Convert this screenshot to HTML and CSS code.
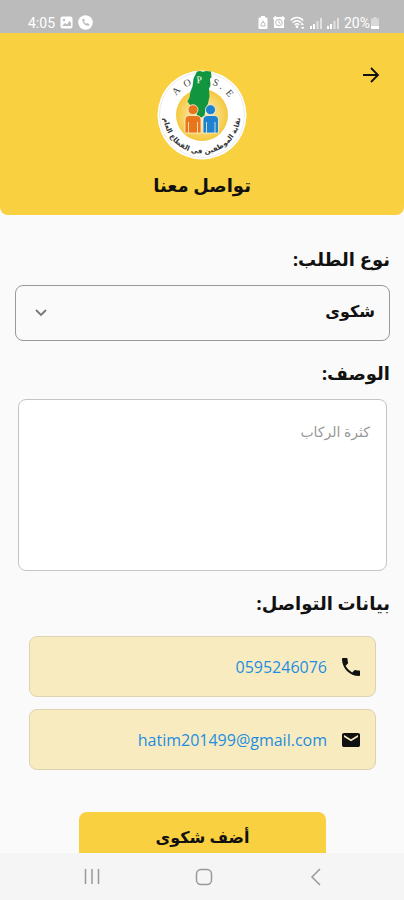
FILE: index.html
```html
<!DOCTYPE html>
<html lang="ar" dir="rtl">
<head>
  <meta charset="UTF-8">
  <meta name="viewport" content="width=device-width, initial-scale=1.0">
  <title>تواصل معنا</title>
  <link rel="stylesheet" href="styles.css">
</head>
<body>
<div class="status-bar" dir="ltr">
  <div class="status-group">
    <span>4:05</span>
    <svg width="13" height="13" viewBox="0 0 13 13">
      <rect x="0.5" y="0.5" width="12" height="12" rx="2" fill="#fff"/>
      <circle cx="4" cy="4" r="1.2" fill="#bbb"/>
      <path d="M2 10l3-3 2 1.5L9.500 5 11 7v3z" fill="#bbb"/>
    </svg>
    <svg width="15" height="15" viewBox="0 0 15 15">
      <circle cx="7.500" cy="7.500" r="7.300" fill="#fff"/>
      <path d="M4.500 4c-.6 3.500 2.500 7 6.200 6.700l.7-1.500-2-1.200-1 .8C7 8.200 6.300 7.300 6 6.300l.9-.9-.9-2z" fill="#bbb"/>
    </svg>
  </div>
  <div class="status-group">
    <svg width="10" height="13" viewBox="0 0 10 13">
      <path d="M3 0h4v1.500h1.500a1 1 0 0 1 1 1V12a1 1 0 0 1-1 1h-7a1 1 0 0 1-1-1V2.500a1 1 0 0 1 1-1H3z" fill="#fff"/>
      <path d="M5 4.500v2M3 7.500L5 6l2 1.500V10H3z" fill="none" stroke="#bbb"/>
    </svg>
    <svg width="12" height="13" viewBox="0 0 12 13">
      <path d="M1 1h10v11H1z" fill="#fff"/>
      <path d="M0 3l3-2.500M12 3L9 .5" stroke="#fff" stroke-width="1.500"/>
      <circle cx="6" cy="6.500" r="3.300" fill="none" stroke="#bbb"/>
      <path d="M6 4.500v2.200l1.400 1" fill="none" stroke="#bbb"/>
    </svg>
    <svg width="15" height="13" viewBox="0 0 15 13" fill="none" stroke="#fff">
      <path d="M.7 4.500c3.500-4 9-4 12.500 0M2.700 6.700c2.500-2.700 6-2.700 8.500 0M4.700 8.800c1.500-1.500 3-1.500 4.500 0" stroke-width="1.400"/>
      <circle cx="7" cy="10.700" r="1" fill="#fff"/>
      <path d="M11 9l1.200-1.500L13.400 9M11.500 11l1.200 1.500 1.200-1.500" stroke-width="1.200"/>
    </svg>
    <svg width="12" height="12" viewBox="0 0 12 12">
      <path d="M0 9h2v3H0zM3 7h2v5H3z" fill="#fff"/>
      <path d="M6.500 4h2v8h-2zM10 1h2v11h-2z" fill="#e2e2e2"/>
    </svg>
    <svg width="12" height="12" viewBox="0 0 12 12">
      <path d="M0 9h2v3H0zM3 7h2v5H3z" fill="#fff"/>
      <path d="M6.500 4h2v8h-2zM10 1h2v11h-2z" fill="#e2e2e2"/>
    </svg>
    <span class="battery">20%
      <svg width="8" height="12" viewBox="0 0 8 12">
        <path d="M2.500 0h3v1.500H8V12H0V1.500h2.500z" fill="#d8d8d8"/>
        <path d="M0 9h8v3H0z" fill="#fff"/>
      </svg>
    </span>
  </div>
</div>

<header class="page-header">
  <button class="back-button" type="button" aria-label="رجوع">
    <svg width="18" height="18" viewBox="0 0 18 18" fill="none" stroke="#111" stroke-width="1.800">
      <path d="M1 9h15M9 2l7 7-7 7"/>
    </svg>
  </button>
  <svg class="logo" viewBox="0 0 90 90" direction="ltr" role="img" aria-label="AOPSE">
    <defs>
      <radialGradient id="glow">
        <stop offset="0" stop-color="#fff3cf"/>
        <stop offset="1" stop-color="#f4c83e"/>
      </radialGradient>
      <path id="arc-top" d="M13 45a32 32 0 0 1 64 0"/>
      <path id="arc-bottom" d="M6.500 45a38.500 38.500 0 0 0 77 0"/>
    </defs>
    <circle cx="45" cy="45" r="44.500" fill="#fff"/>
    <circle cx="45" cy="45" r="42.500" fill="none" stroke="#e3e3e3" stroke-width="0.700"/>
    <circle cx="45" cy="45" r="26" fill="url(#glow)"/>
    <path d="M40 1.500L43 1l3 .8L49 1l5 .5.500 6-1.500 1 .5 7-1.500 3 .5 8-1.500 7-2.500 6-1 6-3 2-4-1-2-6-5-5-3-4 2-4 1-6 2-5 1-8z" fill="#11963f"/>
    <g stroke="#fff3cf" stroke-width="0.800">
      <path d="M28 63V50q0-4.500 4.500-4.500h6.500q5 0 5 4.500v13z" fill="#e8741c"/>
      <circle cx="36" cy="39.700" r="5" fill="#e8741c"/>
      <path d="M46 63V50q0-4.500 5-4.500h6q4.500 0 4.500 4.500v13z" fill="#1e82d2"/>
      <circle cx="53.500" cy="39.700" r="5" fill="#1e82d2"/>
      <path d="M31.500 52v11M40.500 52v11M49.500 52v11M58 52v11"/>
    </g>
    <text class="logo-latin"><textPath href="#arc-top" startOffset="51%">A&nbsp; O&nbsp; <tspan class="logo-light">P</tspan>&nbsp; . S . &nbsp;E</textPath></text>
    <text class="logo-arabic"><textPath href="#arc-bottom" startOffset="50%">نقابة الموظفين في القطاع العام</textPath></text>
  </svg>
  <h1>تواصل معنا</h1>
</header>

<main class="content">
  <form class="contact-form">
    <label for="request-type">نوع الطلب:</label>
    <div class="select-box">
      <select id="request-type">
        <option>شكوى</option>
      </select>
      <svg class="chevron" width="12" height="8" viewBox="0 0 12 8" fill="none" stroke="#777" stroke-width="1.800">
        <path d="M1 1l5 5 5-5"/>
      </svg>
    </div>

    <label for="description">الوصف:</label>
    <textarea id="description" placeholder="كثرة الركاب"></textarea>

    <h2>بيانات التواصل:</h2>
    <div class="contact-list">
      <a class="contact-card" href="tel:0595246076">
        <svg width="24" height="24" viewBox="0 0 24 24">
          <path d="M6.620 10.790c1.440 2.830 3.760 5.140 6.590 6.590l2.200-2.200c.27-.27.67-.36 1.020-.24 1.120.37 2.330.57 3.570.57.55 0 1 .45 1 1V20c0 .55-.45 1-1 1C10.610 21 3 13.390 3 4c0-.55.45-1 1-1h3.500c.55 0 1 .45 1 1 0 1.250.2 2.450.57 3.570.11.35.03.74-.25 1.020z" fill="#111"/>
        </svg>
        <span>0595246076</span>
      </a>
      <a class="contact-card" href="mailto:hatim201499@gmail.com">
        <svg width="24" height="24" viewBox="0 0 24 24">
          <path d="M19 5H5c-1.100 0-1.990.8-1.990 1.800L3 17.200C3 18.200 3.900 19 5 19h14c1.100 0 2-.8 2-1.800V6.800C21 5.800 20.100 5 19 5zm0 4l-7 4.300L5 9V7l7 4.300L19 7z" fill="#111"/>
        </svg>
        <span>hatim201499@gmail.com</span>
      </a>
    </div>

    <button class="submit-button" type="submit">أضف شكوى</button>
  </form>
</main>

<nav class="system-nav" dir="ltr">
  <button type="button" aria-label="التطبيقات">
    <svg width="18" height="18" viewBox="0 0 18 18" stroke="#999" stroke-width="1.500">
      <path d="M2.500 1v15M9 1v15M15.500 1v15"/>
    </svg>
  </button>
  <button type="button" aria-label="الرئيسية">
    <svg width="18" height="18" viewBox="0 0 18 18" fill="none" stroke="#999" stroke-width="1.500">
      <rect x="1.500" y="1.500" width="15" height="15" rx="4.500"/>
    </svg>
  </button>
  <button type="button" aria-label="السابق">
    <svg width="18" height="18" viewBox="0 0 18 18" fill="none" stroke="#999" stroke-width="1.500">
      <path d="M13 1L5 9l8 8"/>
    </svg>
  </button>
</nav>
</body>
</html>
```
FILE: styles.css
```css
* {
  box-sizing: border-box;
  margin: 0;
  padding: 0;
}
:root {
  --primary-color: #f8d040;
  --card-color: #f8ebc0;
  --background-color: #fafafa;
  --status-color: #bbbbbb;
  --nav-color: #f5f5f5;
  --text-color: #111111;
  --link-color: #1e8ee0;
  --gray: #999999;
  --light-gray: #c4c4c4;
}

body {
  font-family: "Noto Sans", "DejaVu Sans", sans-serif;
  background-color: var(--background-color);
  color: var(--text-color);
  display: flex;
  flex-direction: column;
  height: 100vh;
  overflow: hidden;
}

button,
select,
textarea {
  font-family: inherit;
  color: inherit;
}

button {
  border: none;
  background: none;
  cursor: pointer;
}

svg {
  display: block;
  flex-shrink: 0;
}

.status-bar {
  display: flex;
  justify-content: space-between;
  align-items: center;
  height: 33px;
  padding: 12px 25px 0 28px;
  background-color: var(--status-color);
  color: #fff;
  font-family: Roboto, sans-serif;
  font-size: 14px;
  flex-shrink: 0;
}

.status-group {
  display: flex;
  align-items: center;
  gap: 5px;
}

.battery {
  display: flex;
  align-items: center;
  gap: 1px;
}

.page-header {
  display: grid;
  grid-template-columns: 1fr auto 1fr;
  justify-items: center;
  padding: 33px 16px 15px;
  background-color: var(--primary-color);
  border-radius: 0 0 8px 8px;
  flex-shrink: 0;
}

.back-button {
  justify-self: start;
  align-self: start;
  padding: 0 8px;
}

.logo {
  width: 90px;
  height: 90px;
  margin-top: 4px;
}

.logo-latin {
  font-family: "Liberation Serif", serif;
  font-size: 10px;
  fill: #444;
  text-anchor: middle;
}

.logo-light {
  fill: #fff;
}

.logo-arabic {
  font-family: "DejaVu Sans", sans-serif;
  font-size: 7px;
  font-weight: bold;
  fill: #333;
  text-anchor: middle;
}

.page-header h1 {
  grid-column: 1 / -1;
  margin-top: 10px;
  font-size: 18px;
  line-height: 30px;
}

.content {
  flex: 1;
  min-height: 0;
  overflow: hidden;
  padding: 28px 14px 0 15px;
}

.contact-form {
  display: flex;
  flex-direction: column;
}

.contact-form label,
.contact-form h2 {
  font-size: 18px;
  font-weight: bold;
  line-height: 32px;
}

.select-box {
  display: grid;
  align-items: center;
  margin: 10px 0 16px;
}

.select-box select,
.chevron {
  grid-area: 1 / 1;
}

.select-box select {
  appearance: none;
  width: 100%;
  height: 56px;
  padding: 0 14px 4px;
  border: 1px solid var(--gray);
  border-radius: 8px;
  background-color: transparent;
  font-size: 16px;
  font-weight: bold;
}

.chevron {
  justify-self: end;
  margin-left: 20px;
  pointer-events: none;
}

.contact-form textarea {
  height: 172px;
  margin: 10px 3px 16px;
  padding: 20px 16px;
  border: 1px solid var(--light-gray);
  border-radius: 8px;
  background-color: #fff;
  font-size: 14px;
  line-height: 24px;
  resize: none;
}

.contact-form textarea::placeholder {
  color: var(--gray);
}

.contact-list {
  display: flex;
  flex-direction: column;
  gap: 12px;
  margin: 17px 14px 42px;
}

.contact-card {
  display: flex;
  align-items: center;
  gap: 12px;
  height: 61px;
  padding: 0 12px;
  border: 1px solid #ddd3b0;
  border-radius: 8px;
  background-color: var(--card-color);
  color: var(--link-color);
  font-family: "Open Sans", "Noto Sans", sans-serif;
  font-size: 16px;
  font-weight: 500;
  text-decoration: none;
}

.submit-button {
  align-self: center;
  width: 66%;
  height: 50px;
  border-radius: 8px;
  background-color: var(--primary-color);
  font-size: 16px;
  font-weight: bold;
}

.system-nav {
  display: flex;
  justify-content: space-around;
  align-items: center;
  height: 47px;
  padding: 0 32px 0 36px;
  background-color: var(--nav-color);
  flex-shrink: 0;
}
```
